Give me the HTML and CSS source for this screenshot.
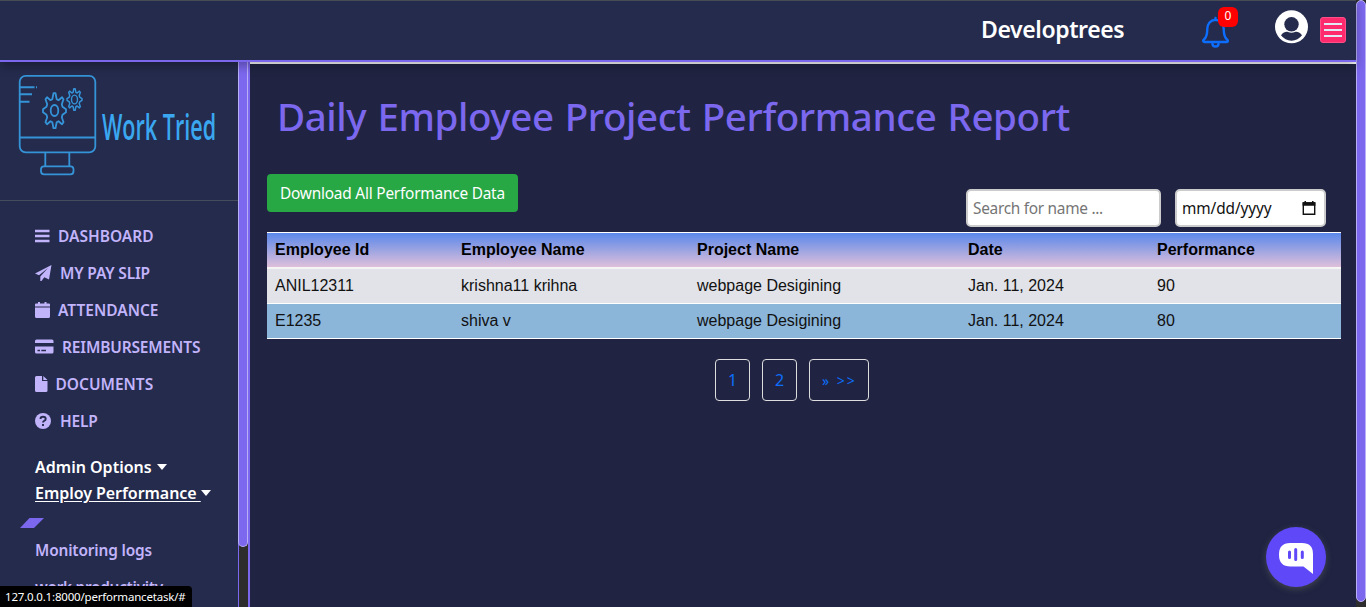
FILE: index.html
```html
<!DOCTYPE html>
<html lang="en">
<head>
<meta charset="utf-8">
<title>Daily Employee Project Performance Report</title>
<link rel="stylesheet" href="styles.css">
</head>
<body>
<div class="page">
  <header class="topbar">
    <div class="company">Developtrees</div>
    <div class="bell">
      <svg width="28" height="32" viewBox="0 0 28 32" fill="none" stroke="#0d6efd" stroke-width="2.400" stroke-linecap="round" stroke-linejoin="round"><path d="M13.500 3.700c-5 .5-8.200 4-8.200 9.300 0 6-1.200 9-3.600 10.800-.8.600-.8 2.200.6 2.200h22.400c1.400 0 1.400-1.600.6-2.200-2.400-1.800-3.600-4.800-3.600-10.800 0-5.300-3.200-8.800-8.200-9.300zM13.500 3.700V2M10.500 28a3 2.500 0 0 0 6 0"/></svg>
      <span class="badge">0</span>
    </div>
    <svg class="avatar" width="34" height="34" viewBox="0 0 34 34"><circle cx="16.500" cy="16.800" r="16.500" fill="#fff"/><circle cx="16.500" cy="14.300" r="7.200" fill="#242b4d"/><path d="M6 25.300c2.500-3.500 5.500-3.900 7-3.300 2.300.9 4.700.9 7 0 1.500-.6 4.500-.2 7 3.300a13 13 0 0 1-21 0z" fill="#242b4d"/></svg>
    <div class="burger"><i></i><i></i><i></i></div>
  </header>
  <div class="body">
    <aside class="sidebar">
      <svg class="logo" width="238" height="138" viewBox="0 62 238 138" fill="none" stroke="#3594d8" stroke-width="1.800">
        <defs>
          <path id="gear" vector-effect="non-scaling-stroke" stroke-linejoin="round" d="M-1-17.500H1L2.200-11.500 4-10.500 7.500-13.500 9-11.500 7.300-6.500 8-4 11.500-1.500V1.500L8 4 7.300 6.500 9 11.500 7.500 13.500 4 10.500 2.200 11.500 1 17.500H-1L-2.200 11.500-4 10.500-7.500 13.500-9 11.500-7.300 6.500-8 4-11.500 1.500V-1.500L-8-4-7.300-6.500-9-11.500-7.500-13.500-4-10.500-2.200-11.500z"/>
        </defs>
        <rect x="19.700" y="75.800" width="75.600" height="76.500" rx="6"/>
        <path d="M20 137.500h75" stroke-width="2.200"/>
        <path d="M20 87.300h14.500M36 87.300h1M20 94.300h12M20 101.800h9.500" stroke-width="2"/>
        <path d="M45.300 153v13M69.300 153v13"/>
        <rect x="41" y="166.300" width="32.500" height="8" rx="3"/>
        <use href="#gear" transform="translate(54.500 110.700)"/>
        <ellipse cx="54.500" cy="110.500" rx="3.800" ry="5.500"/>
        <use href="#gear" transform="translate(74.500 99.500) scale(.65 .62)" stroke-width="1.500"/>
        <ellipse cx="74.500" cy="99.500" rx="3" ry="4.400" stroke-width="1.400"/>
        <text class="logotext" transform="translate(102 140) scale(.62 1)" x="0" y="0" textLength="184" lengthAdjust="spacingAndGlyphs">Work Tried</text>
      </svg>
      <nav class="menu">
        <a class="item dash"><svg width="15" height="16" viewBox="0 0 15 16"><path d="M0 3h14.500M0 8h14.500M0 13h14.500" stroke="currentColor" stroke-width="2.400"/></svg><span>DASHBOARD</span></a>
        <a class="item pay"><svg width="17" height="16" viewBox="0 0 17 16"><path fill="currentColor" d="M16.500 0L14 14.500 9.300 12.300 6.500 16H5.300v-4.500L13 3 4 10.300 0 8.500z"/></svg><span>MY PAY SLIP</span></a>
        <a class="item att"><svg width="15" height="16" viewBox="0 0 15 16"><path fill="currentColor" d="M1 1.500h2V0h2v1.500h4.500V0h2v1.500H14q1 0 1 1V4.500H0V2.500q0-1 1-1zM0 5.500h15v9q0 1.500-1.500 1.500h-12Q0 16 0 14.500z"/></svg><span>ATTENDANCE</span></a>
        <a class="item rei"><svg width="18.500" height="15" viewBox="0 0 18.500 15"><path fill="currentColor" fill-rule="evenodd" d="M1.500.5h15.500q1.500 0 1.500 1.500v2H0V2Q0 .5 1.500.5zM0 7.500h18.500v5.500q0 1.500-1.500 1.500H1.500Q0 14.500 0 13zM2.500 10.800v1.500H5v-1.500zM6.300 10.800v1.500H11v-1.500z"/></svg><span>REIMBURSEMENTS</span></a>
        <a class="item doc"><svg width="12.500" height="16" viewBox="0 0 12.500 16"><path fill="currentColor" d="M1.500 0H7v5h5.500v9.500q0 1.500-1.500 1.500H1.500Q0 16 0 14.500v-13Q0 0 1.500 0zM8.300 0L12.500 4H8.300z"/></svg><span>DOCUMENTS</span></a>
        <a class="item help"><svg width="16" height="16" viewBox="0 0 16 16"><circle cx="8" cy="8" r="8" fill="currentColor"/><path d="M5.500 6c0-1.700 1.200-2.300 2.500-2.300 1.500 0 2.700.8 2.700 2.200C10.700 7.800 8 7.700 8 9.500M8 11v2" fill="none" stroke="#242b4d" stroke-width="1.900"/></svg><span>HELP</span></a>
      </nav>
      <div class="drop admin"><span>Admin Options</span><b></b></div>
      <div class="drop employ"><span>Employ Performance&nbsp;</span><b></b></div>
      <svg class="mark" width="24" height="10" viewBox="0 0 24 10"><path d="M0 10L9.500 0H24L14 10z" fill="#7b68ee"/></svg>
      <div class="sub logs">Monitoring logs</div>
      <div class="sub work">work productivity</div>
    </aside>
    <div class="rail"><i></i></div>
    <main class="main">
      <h1><span>Daily Employee Project Performance Report</span></h1>
      <div class="tools">
        <button class="download"><span>Download All Performance Data</span></button>
        <div class="filters">
          <div class="field search"><span>Search for name ...</span></div>
          <div class="field date"><span>mm/dd/yyyy</span>
            <svg width="14" height="15" viewBox="0 0 14 15"><path d="M1.300 2h11.400v11.300H1.300z" fill="none" stroke="#111" stroke-width="1.400"/><path d="M.6 1.300h12.800v3.400H.6zM2.500 0h1.500v2H2.500zM10 0h1.500v2H10z" fill="#111"/></svg></div>
        </div>
      </div>
      <table class="report">
        <thead><tr><th>Employee Id</th><th>Employee Name</th><th>Project Name</th><th>Date</th><th>Performance</th></tr></thead>
        <tbody>
          <tr><td>ANIL12311</td><td>krishna11 krihna</td><td>webpage Desigining</td><td>Jan. 11, 2024</td><td>90</td></tr>
          <tr><td>E1235</td><td>shiva v</td><td>webpage Desigining</td><td>Jan. 11, 2024</td><td>80</td></tr>
        </tbody>
      </table>
      <div class="pager"><a>1</a><a>2</a><a class="next">» &gt;&gt;</a></div>
    </main>
  </div>
</div>
<div class="pagerail"><i></i></div>
<div class="chat"><svg width="34" height="31" viewBox="0 0 34 31"><path d="M11 0h12q11 0 11 11v20l-9.500-7.500H11.500Q0 23.500 0 11.700 0 0 11 0z" fill="#fff"/><path d="M10.500 9v5.500M16.700 6.500v10M23.300 9v5.500" stroke="#5f48f8" stroke-width="3" stroke-linecap="round"/></svg></div>
<div class="status"><span>127.0.0.1:8000/performancetask/#</span></div>
</body>
</html>
```
FILE: styles.css
```css
* { box-sizing: border-box; }
body { margin: 0; width: 1366px; height: 607px; overflow: hidden; display: flex; background: #202442; font-family: "Noto Sans", "Open Sans", sans-serif; font-size: 16px; }
span { white-space: nowrap; }
.page { width: 1356px; height: 607px; display: flex; flex-direction: column; }
.topbar { position: relative; z-index: 1; flex: 0 0 62px; display: flex; align-items: flex-start; background: #242b4d; border-top: 1px solid #484c55; border-bottom: 2px solid #7b68ee; box-shadow: 0 4px 10px rgba(0,0,0,.3); }
.company { margin-left: 981px; width: 221px; padding-top: 12px; line-height: 33px; font-size: 23px; font-weight: 600; color: #fff; letter-spacing: -.4px; }
.bell { position: relative; width: 73px; padding-top: 15px; }
.bell svg { display: block; }
.badge { position: absolute; left: 16px; top: 6px; width: 20px; height: 20px; border-radius: 6px; background: #f00; color: #fff; font-size: 12px; line-height: 18px; text-align: center; }
.avatar { margin-top: 9px; }
.burger { margin: 16px 0 0 11px; width: 26px; height: 26px; border: 1px solid #ff4f88; border-radius: 3px; background: #ff2a6d; padding: 5px 3px; display: flex; flex-direction: column; gap: 4px; }
.burger i { height: 2px; background: #e0e8f5; }
.body { flex: 1; min-height: 0; display: flex; }
.sidebar { width: 238px; overflow: hidden; background: #242b4d; color: #c2b4fb; }
.logo { display: block; }
.logotext { font: 600 36px "Open Sans", sans-serif; fill: #3aa7f0; stroke: none; }
.menu { border-top: 1px solid #454d5c; padding: 16px 0 0 35px; height: 239px; }
.item { display: flex; align-items: center; height: 37px; font-size: 15.500px; font-weight: 600; }
.item svg { margin-right: 8px; flex: none; }
.rei svg { margin-right: 8.500px; }
.rei span, .pay span { letter-spacing: -.15px; }
.help svg { margin-right: 9px; }
.help span { letter-spacing: -.2px; }
.drop { display: flex; align-items: center; height: 26px; padding-left: 35px; color: #fff; font-size: 16px; font-weight: 600; }
.admin { margin-top: 15px; }
.drop b { border: 5.500px solid transparent; border-top: 6px solid #fff; border-bottom: 0; margin-left: 5px; }
.employ b { margin-left: 0; }
.employ span { letter-spacing: -.05px; text-decoration: underline; text-underline-offset: 2px; }
.mark { display: block; margin: 12px 0 0 20px; }
.sub { padding-left: 35px; font-size: 15.400px; font-weight: 600; line-height: 24px; letter-spacing: -.15px; }
.logs { margin-top: 11px; }
.work { margin-top: 13px; letter-spacing: -.28px; }
.rail { width: 12px; background: #2d2d2d; border-right: 2px solid #7b68ee; border-left: 1px solid #7b68ee; }
.rail i { display: block; margin-left: -1px; width: 10px; height: 485px; background: #7b68ee; border: 1px solid #b9aff7; border-top: 0; border-radius: 0 0 5px 5px; }
.main { flex: 1; min-width: 0; border-top: 2px solid #fff; padding: 0 15px 0 17px; }
h1 { margin: 0; padding: 27px 0 0 10px; height: 110px; line-height: 50px; font-size: 38.500px; font-weight: 500; color: #7b68ee; letter-spacing: -.4px; word-spacing: 1.500px; }
.tools { height: 58px; display: flex; justify-content: space-between; }
.download { width: 251px; height: 38px; padding: 0 0 0 13px; border: 0; border-radius: 4px; background: #28a745; color: #fff; font: 15.400px "Noto Sans", sans-serif; text-align: left; letter-spacing: -.21px; }
.filters { display: flex; gap: 14px; margin: 15px 15px 0 0; }
.field { height: 38px; display: flex; align-items: center; background: #fff; border: 2px solid #ccc; border-radius: 5px; padding: 0 5px; font-size: 15.400px; }
.search { width: 195px; color: #757575; letter-spacing: -.28px; }
.date { width: 151px; justify-content: space-between; padding-right: 8px; color: #111; letter-spacing: -.1px; }
.report { width: 1074px; table-layout: fixed; border-collapse: separate; border-spacing: 0; font: 16px/24px "Liberation Sans", sans-serif; color: #111; }
.report th { height: 37px; padding: 0 8px; text-align: left; border-top: 1px solid #fff; border-bottom: 2px solid #f5f5f5; color: #000; }
.report thead tr { background: linear-gradient(#5686ea, #e6c3d9); }
.report td { height: 35px; padding: 0 8px; border-bottom: 1px solid #fff; }
.report tbody tr { background: #e2e3e8; }
.report tbody tr + tr { background: #8bb5d9; }
.report th:nth-child(1) { width: 186px; }
.report th:nth-child(2) { width: 236px; }
.report th:nth-child(3) { width: 271px; }
.report th:nth-child(4) { width: 189px; }
.pager { display: flex; gap: 12px; padding: 20px 0 0 448px; }
.pager a { width: 35px; height: 42px; border: 1px solid #ddd; border-radius: 4px; color: #0d6efd; line-height: 41px; text-align: center; white-space: nowrap; }
.pager .next { width: 60px; font-size: 14px; letter-spacing: 2px; padding-left: 1px; }
.pagerail { width: 10px; height: 607px; background: #2d2d2d; }
.pagerail i { display: block; height: 602px; background: #7b68ee; border: 1px solid #b9aff7; border-radius: 5px; }
.chat { position: absolute; left: 1266px; top: 527px; width: 60px; height: 60px; border-radius: 50%; background: #5f48f8; box-shadow: 0 2px 6px rgba(90,90,90,.6); padding: 16px 0 0 13px; }
.status { position: absolute; z-index: 2; left: 0; bottom: 0; width: 192px; height: 21px; padding-left: 5px; background: #000; border-radius: 0 4px 0 0; color: #fff; font-size: 11.500px; line-height: 21px; letter-spacing: -.19px; }
```
